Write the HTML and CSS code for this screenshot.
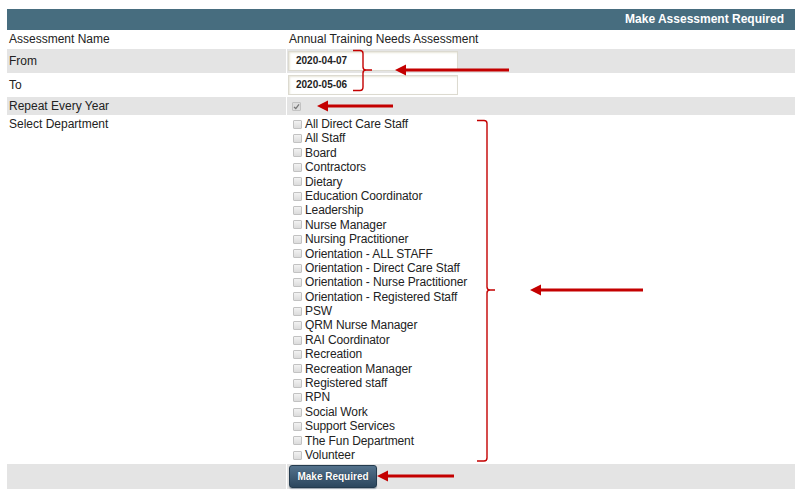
FILE: index.html
```html
<!DOCTYPE html>
<html>
<head>
<meta charset="utf-8">
<link rel="stylesheet" href="styles.css">
</head>
<body>
<div class="page">
  <div class="head">Make Assessment Required</div>
  <div class="row r-name">
    <div class="lab">Assessment Name</div>
    <div class="val">Annual Training Needs Assessment</div>
  </div>
  <div class="row r-date grey">
    <div class="lab">From</div>
    <div class="val"><div class="inp">2020-04-07</div></div>
  </div>
  <div class="row r-date">
    <div class="lab">To</div>
    <div class="val"><div class="inp">2020-05-06</div></div>
  </div>
  <div class="row r-rep grey">
    <div class="lab">Repeat Every Year</div>
    <div class="val"><span class="cb checked"><svg width="7" height="7" viewBox="0 0 7 7"><path d="M1 4 L2.8 5.6 L6 1.4" fill="none" stroke="#777" stroke-width="1.3"/></svg></span></div>
  </div>
  <div class="row r-dept">
    <div class="lab">Select Department</div>
    <div class="val">
      <ul class="list">
        <li><span class="cb"></span>All Direct Care Staff</li>
        <li><span class="cb"></span>All Staff</li>
        <li><span class="cb"></span>Board</li>
        <li><span class="cb"></span>Contractors</li>
        <li><span class="cb"></span>Dietary</li>
        <li><span class="cb"></span>Education Coordinator</li>
        <li><span class="cb"></span>Leadership</li>
        <li><span class="cb"></span>Nurse Manager</li>
        <li><span class="cb"></span>Nursing Practitioner</li>
        <li><span class="cb"></span>Orientation - ALL STAFF</li>
        <li><span class="cb"></span>Orientation - Direct Care Staff</li>
        <li><span class="cb"></span>Orientation - Nurse Practitioner</li>
        <li><span class="cb"></span>Orientation - Registered Staff</li>
        <li><span class="cb"></span>PSW</li>
        <li><span class="cb"></span>QRM Nurse Manager</li>
        <li><span class="cb"></span>RAI Coordinator</li>
        <li><span class="cb"></span>Recreation</li>
        <li><span class="cb"></span>Recreation Manager</li>
        <li><span class="cb"></span>Registered staff</li>
        <li><span class="cb"></span>RPN</li>
        <li><span class="cb"></span>Social Work</li>
        <li><span class="cb"></span>Support Services</li>
        <li><span class="cb"></span>The Fun Department</li>
        <li><span class="cb"></span>Volunteer</li>
      </ul>
    </div>
  </div>
  <div class="row r-btn grey">
    <div class="lab"></div>
    <div class="val"><button class="btn">Make Required</button></div>
  </div>
</div>
<svg class="notes" width="799" height="495" viewBox="0 0 799 495">
  <g fill="none" stroke="#c40000" stroke-width="1.4">
    <path d="M353 50.5 H360 Q363 50.5 363 53.5 V67 Q363 70 366 70 H372 M366 70 Q363 70 363 73 V87 Q363 90.5 360 90.5 H353"/>
    <path d="M477 120.5 H484 Q487 120.5 487 123.5 V287 Q487 290 490 290 H495 M490 290 Q487 290 487 293 V458 Q487 461 484 461 H477"/>
  </g>
  <g stroke="#c40000" stroke-width="3">
    <path d="M509 70 H402"/>
    <path d="M393 106 H324"/>
    <path d="M643 290 H537"/>
    <path d="M454 476 H384"/>
  </g>
  <g fill="#c40000">
    <polygon points="395,70 406,64.5 406,75.5"/>
    <polygon points="317,106 328,100.5 328,111.5"/>
    <polygon points="530,290 541,284.5 541,295.5"/>
    <polygon points="377,476 388,470.5 388,481.5"/>
  </g>
</svg>
</body>
</html>
```

FILE: styles.css
```css
html, body {
  margin: 0;
  padding: 0;
  background: #fff;
}
body {
  font-family: "Liberation Sans", Arial, sans-serif;
  font-size: 12px;
  color: #222;
  position: relative;
  width: 799px;
  height: 495px;
  overflow: hidden;
}
.page {
  padding: 9px 4px 0 7px;
  display: flex;
  flex-direction: column;
}
.head {
  height: 21px;
  background: #476d7f;
  color: #fff;
  font-weight: bold;
  font-size: 12px;
  text-align: right;
  line-height: 21px;
  padding-right: 11px;
}
.row {
  display: grid;
  grid-template-columns: 279px 1fr;
  column-gap: 1px;
}
.row.grey .lab,
.row.grey .val {
  background: #e4e4e4;
}
.lab {
  padding-left: 2px;
}
.val {
  padding-left: 2px;
}
.r-name {
  height: 19px;
  line-height: 19px;
}
.r-date {
  height: 24px;
  line-height: 24px;
}
.r-date .val {
  padding-left: 1px;
  display: flex;
  align-items: center;
}
.inp {
  width: 161px;
  height: 18px;
  line-height: 18px;
  border: 1px solid #dcdad0;
  box-shadow: inset 1px 1px 2px #e8e6da;
  background: #fff;
  font-size: 10px;
  font-weight: bold;
  color: #222;
  padding-left: 7px;
}
.r-rep {
  height: 18px;
  line-height: 18px;
}
.r-rep .val {
  display: flex;
  align-items: center;
  padding-left: 5px;
}
.cb {
  display: inline-block;
  width: 7px;
  height: 7px;
  border: 1px solid #c2c2c2;
  border-radius: 1px;
  background: linear-gradient(#f2f2f2, #dcdcdc);
  box-sizing: content-box;
  vertical-align: middle;
}
.cb.checked {
  display: flex;
  align-items: center;
  justify-content: center;
  background: #dedede;
}
.r-dept {
  height: 349px;
  line-height: 18px;
}
.list {
  list-style: none;
  margin: 0;
  padding: 2px 0 0 4px;
}
.list li {
  height: 14.4px;
  line-height: 14.4px;
  display: flex;
  align-items: center;
  white-space: nowrap;
  letter-spacing: -0.1px;
}
.list .cb {
  margin-right: 3px;
}
.r-btn {
  height: 25px;
}
.r-btn .val {
  display: flex;
  align-items: center;
}
.btn {
  margin: 0;
  padding: 0;
  width: 88px;
  height: 23px;
  border: 1px solid #243b4e;
  border-radius: 3px;
  background: linear-gradient(#54728c, #2c475e);
  color: #fff;
  font-family: "Liberation Sans", Arial, sans-serif;
  font-size: 10px;
  font-weight: bold;
  text-shadow: 0 0 1px #1c2e3d;
  box-shadow: 0 1px 1px #9aa4ad;
}
.notes {
  position: absolute;
  left: 0;
  top: 0;
  pointer-events: none;
}
```
